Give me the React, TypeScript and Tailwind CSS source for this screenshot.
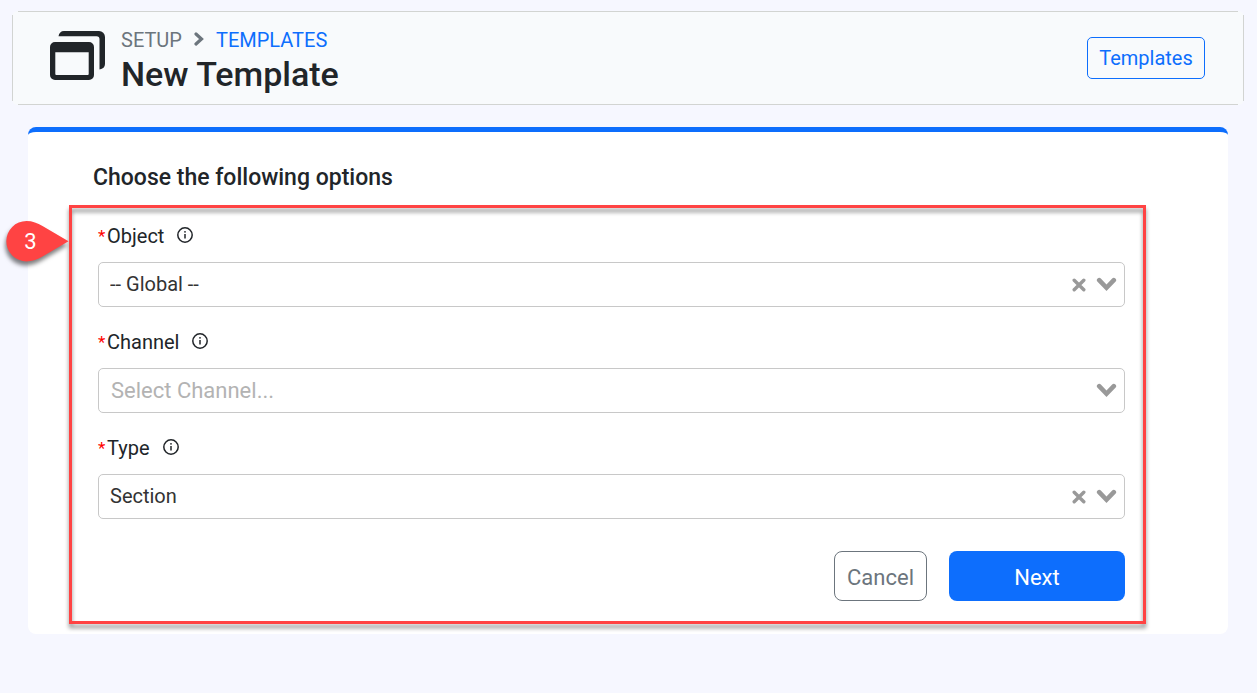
import { useId, useState } from "react";

type Option = { value: string; label: string };

function WindowsIcon() {
  return (
    <svg viewBox="0 0 55 49" className="h-[49px] w-[55px] shrink-0 text-[#212529]" fill="currentColor" aria-hidden="true">
      <path
        fillRule="evenodd"
        d="M5 11h34a5 5 0 0 1 5 5v28a5 5 0 0 1-5 5H5a5 5 0 0 1-5-5V16a5 5 0 0 1 5-5Zm.3 10.300V43a1 1 0 0 0 1 1h31.400a1 1 0 0 0 1-1V21.300Z"
      />
      <path d="M8.500 5.300C9 2 11 0 14 0h35a6 6 0 0 1 6 6v27c0 3-2 5-5.500 5.400V8.300a3 3 0 0 0-3-3Z" />
    </svg>
  );
}

function InfoIcon() {
  return (
    <svg viewBox="0 0 16 16" className="size-4 text-[#212529]" aria-hidden="true">
      <circle cx="8" cy="8" r="7.200" fill="none" stroke="currentColor" strokeWidth="1.500" />
      <circle cx="8" cy="4.800" r="0.900" fill="currentColor" />
      <path d="M8 7v4.600" stroke="currentColor" strokeWidth="1.500" />
    </svg>
  );
}

function SelectField({
  label,
  options,
  initial,
  placeholder,
}: {
  label: string;
  options: Option[];
  initial: string;
  placeholder: string;
}) {
  const id = useId();
  const [value, setValue] = useState(initial);
  return (
    <div>
      <div className="flex h-6 items-center">
        <label htmlFor={id} className="flex items-center text-[20px] leading-6 text-[#212529]">
          <span className="w-[9px] text-[17px] text-[#ff0000]">*</span>
          {label}
        </label>
        <button type="button" aria-label={`About ${label}`} className="mb-[3px] ml-[13px]">
          <InfoIcon />
        </button>
      </div>
      <div className="relative mt-[14px]">
        <select
          id={id}
          value={value}
          onChange={(e) => setValue(e.target.value)}
          className={
            value
              ? "h-[45px] w-full appearance-none rounded-[5px] border border-[#c8c8c8] bg-white pr-20 pb-0.5 pl-[11px] text-[20px] text-[#333333]"
              : "h-[45px] w-full appearance-none rounded-[5px] border border-[#c8c8c8] bg-white pr-20 pl-3 text-[22px] text-[#b3b3b3]"
          }
        >
          <option value="" disabled hidden>
            {placeholder}
          </option>
          {options.map((o) => (
            <option key={o.value} value={o.value}>
              {o.label}
            </option>
          ))}
        </select>
        <div className="pointer-events-none absolute inset-y-0 right-2 flex items-center gap-2.5 text-[#999999]">
          {value && (
            <button type="button" aria-label={`Clear ${label}`} className="pointer-events-auto" onClick={() => setValue("")}>
              <svg viewBox="0 0 14 14" className="size-3.5" aria-hidden="true">
                <path d="m2.200 2.200 9.600 9.600m0-9.600-9.600 9.600" stroke="currentColor" strokeWidth="3.400" strokeLinecap="round" />
              </svg>
            </button>
          )}
          <svg viewBox="0 0 21 15" className="h-[15px] w-[21px]" aria-hidden="true">
            <path d="M3.200 3.200 10.500 10.800l7.300-7.600" fill="none" stroke="currentColor" strokeWidth="4.600" strokeLinecap="round" />
          </svg>
        </div>
      </div>
    </div>
  );
}

function StepMarker({ step }: { step: number }) {
  return (
    <div className="absolute top-[14px] -left-[63px] h-[44px] w-[63px]">
      <svg viewBox="0 0 63 44" className="size-full overflow-visible drop-shadow-[-1px_4px_2px_rgba(0,0,0,0.5)]" aria-hidden="true">
        <path
          d="M20.500 2c6 0 11 2 16 5l26 15.200L36.500 37.500c-5 3-10 4.900-16 4.900A20.200 20.200 0 0 1 20.500 2Z"
          fill="#ff4343"
        />
      </svg>
      <span className="absolute inset-y-0 left-0 flex w-[49px] items-center justify-center text-[22px] text-white">
        {step}
      </span>
    </div>
  );
}

export default function App() {
  return (
    <div className="min-h-screen bg-[#f6f7ff] px-3 pt-[11px] pb-[59px] font-[Roboto,sans-serif] text-[#212529]">
      <header className="relative mr-px flex h-[94px] items-center justify-between rounded-md bg-[#f8fafc] pr-[39px] pl-[38px] before:pointer-events-none before:absolute before:inset-x-1.5 before:inset-y-0 before:border-y before:border-[#d2d4d2] after:pointer-events-none after:absolute after:inset-x-0 after:inset-y-1 after:border-x after:border-[#d2d4d2]">
        <div className="flex items-center gap-4">
          <div className="pb-1.5">
            <WindowsIcon />
          </div>
          <div className="pt-1.5">
            <nav aria-label="Breadcrumb" className="flex items-center text-[20px] leading-6">
              <span className="text-[#6c757d]">SETUP</span>
              <svg viewBox="0 0 12 14" className="mx-[11px] mb-0.5 h-3.5 w-3 text-[#6c757d]" aria-hidden="true">
                <path d="m3 2 5.500 5L3 12" fill="none" stroke="currentColor" strokeWidth="3.200" strokeLinecap="round" />
              </svg>
              <a href="#templates" className="text-[#0d6efd]">
                TEMPLATES
              </a>
            </nav>
            <h1 className="mt-0.5 text-[34px] leading-10 font-medium">New Template</h1>
          </div>
        </div>
        <button
          type="button"
          className="h-[42px] w-[118px] rounded-[5px] border border-[#0d6efd] text-[20px] text-[#0d6efd]"
        >
          Templates
        </button>
      </header>

      <main className="mt-[22px] mr-[17px] ml-4 rounded-lg border-t-[5px] border-[#0d6efd] bg-white pr-[82px] pb-[10px] pl-[41px]">
        <h2 className="pt-8 pl-6 text-[23px] leading-7 font-medium">Choose the following options</h2>
        <form
          className="relative mt-[13px] pt-[19px] pr-[21px] pb-[23px] pl-[29px]"
          onSubmit={(e) => e.preventDefault()}
        >
          <div className="pointer-events-none absolute inset-0 border-[3px] border-[#ff4343] drop-shadow-[0_4px_2px_rgba(0,0,0,0.45)]" />
          <StepMarker step={3} />
          <div className="flex flex-col gap-[23px]">
            <SelectField
              label="Object"
              initial="global"
              placeholder="Select Object..."
              options={[{ value: "global", label: "-- Global --" }]}
            />
            <SelectField
              label="Channel"
              initial=""
              placeholder="Select Channel..."
              options={[{ value: "email", label: "Email" }]}
            />
            <SelectField
              label="Type"
              initial="section"
              placeholder="Select Type..."
              options={[{ value: "section", label: "Section" }]}
            />
          </div>
          <div className="mt-8 flex justify-end gap-[22px]">
            <button
              type="button"
              className="h-[50px] w-[93px] rounded-lg border border-[#6c757d] bg-white pt-0.5 text-[22px] text-[#6c757d]"
            >
              Cancel
            </button>
            <button type="submit" className="h-[50px] w-44 rounded-lg bg-[#0d6efd] pt-0.5 text-[22px] text-white">
              Next
            </button>
          </div>
        </form>
      </main>
    </div>
  );
}
